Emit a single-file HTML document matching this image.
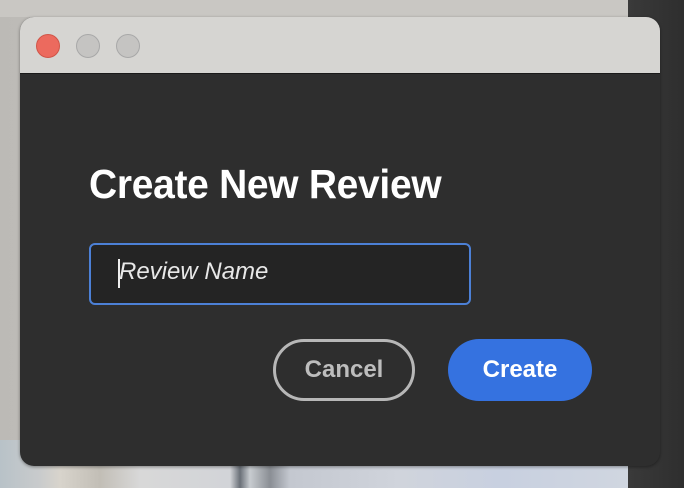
<!DOCTYPE html>
<html><head><style>
html,body{margin:0;width:684px;height:488px;overflow:hidden;font-family:"Liberation Sans",sans-serif}
body{background:linear-gradient(90deg,#bcbab6 0,#cdcbc7 300px,#c9c7c3 600px,#3a3a3a 628px,#2e2e2e 684px);position:relative}
.bot{position:absolute;left:0;top:440px;width:628px;height:48px;background:linear-gradient(90deg,#b8c2c8 0,#c9cbcc 40px,#d8d4cc 60px,#c2beb6 100px,#d8d8d8 140px,#d2d4d8 230px,#6a7078 240px,#c8ccd0 250px,#8a8e94 270px,#c4c8d0 290px,#d0d4dc 400px,#c8d0e0 500px,#d0d6e0 628px)}
.topbar{position:absolute;left:0;top:0;width:628px;height:17px;background:#c9c7c3}
.win{position:absolute;left:20px;top:17px;width:640px;height:449px;border-radius:14px;overflow:hidden;background:#2e2e2e;box-shadow:0 1px 3px rgba(0,0,0,.4)}
.tb{height:56px;background:#d6d5d2;border-bottom:1px solid #1a1a1a}
.dot{position:absolute;top:17px;width:22px;height:22px;border-radius:50%;border:1px solid #a8a8a8;background:#c5c4c2}
h1{position:absolute;left:69px;top:144px;margin:0;color:#fff;font-size:41px;font-weight:bold;letter-spacing:-0.3px;transform:scaleX(0.95);transform-origin:0 0;white-space:nowrap}
.inp{position:absolute;left:69px;top:226px;width:378px;height:58px;border:2px solid #4c80d6;border-radius:6px;background:#242424}
.ph{position:absolute;left:28px;top:13px;color:#e8e8e8;font-style:italic;font-size:24px}
.cur{position:absolute;left:27px;top:14px;width:2px;height:29px;background:#eee}
.btn{position:absolute;top:322px;height:62px;border-radius:31px;box-sizing:border-box;display:flex;align-items:center;justify-content:center;font-weight:bold;font-size:24px}
</style></head><body>
<div class="topbar"></div><div class="bot"></div>
<div class="win">
<div class="tb"></div>
<div class="dot" style="left:16px;background:#ec6a5e;border-color:#d05548"></div>
<div class="dot" style="left:56px"></div>
<div class="dot" style="left:96px"></div>
<h1>Create New Review</h1>
<div class="inp"><div class="cur"></div><div class="ph">Review Name</div></div>
<div class="btn" style="left:253px;width:142px;border:3px solid #b7b7b7;color:#bdbdbd">Cancel</div>
<div class="btn" style="left:428px;width:144px;background:#3572e0;color:#fff">Create</div>
</div>
</body></html>
